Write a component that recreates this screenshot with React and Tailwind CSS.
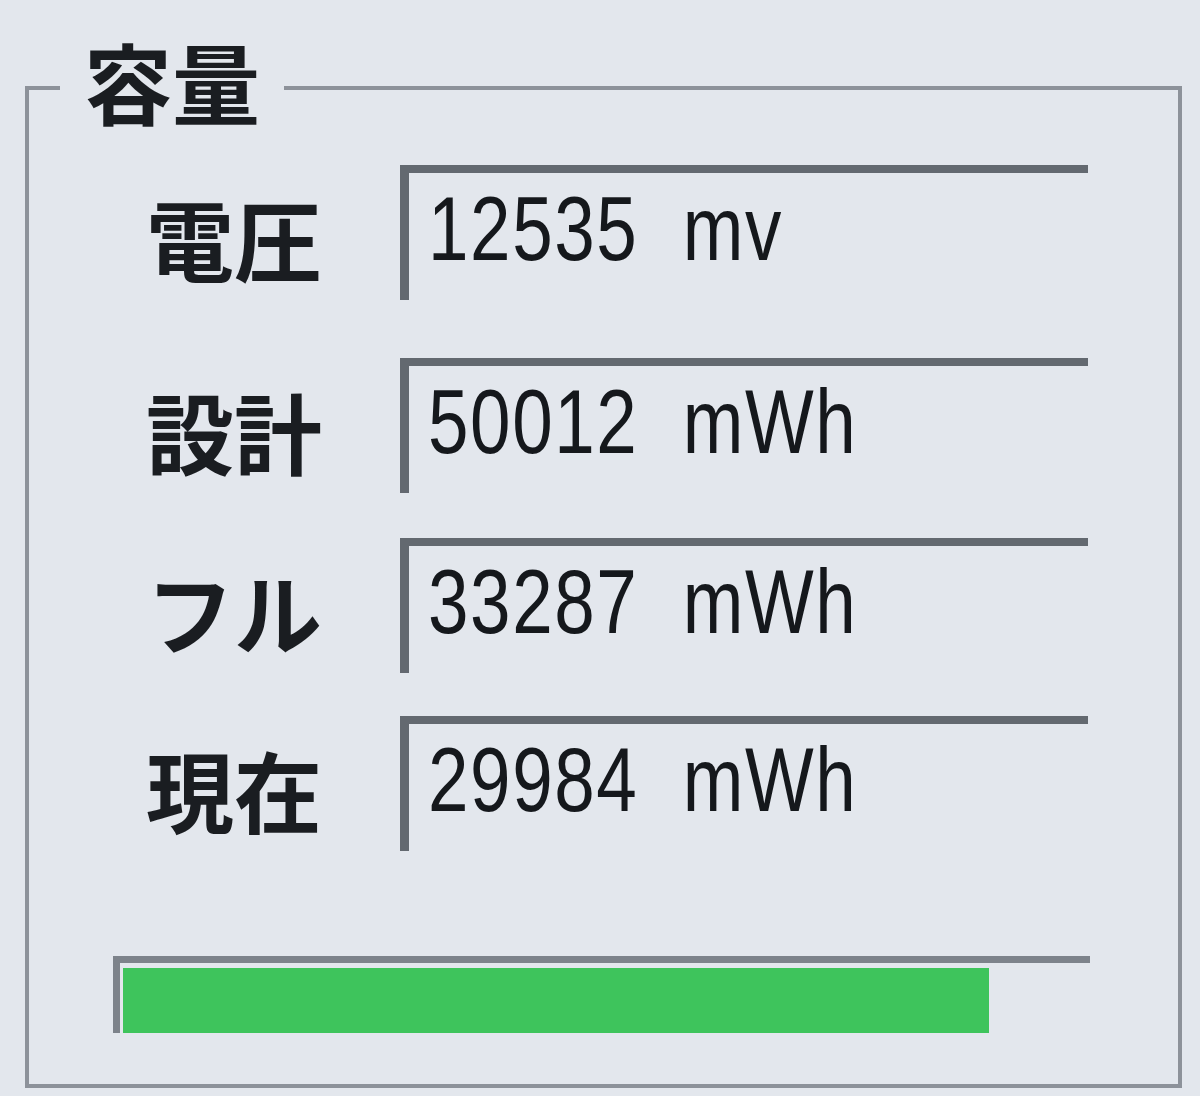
import React from 'react';

const cjk = { fontFamily: '"Noto Sans CJK JP", "Noto Sans", sans-serif' };
const latin = { fontFamily: '"Liberation Sans", Arial, sans-serif' };

// vertical gaps differ a bit row to row in the reference
const rows = [
  { label: '電圧', value: '12535 mv', gap: 'mt-0' },
  { label: '設計', value: '50012 mWh', gap: 'mt-[58px]' },
  { label: 'フル', value: '33287 mWh', gap: 'mt-[45px]' },
  { label: '現在', value: '29984 mWh', gap: 'mt-[43px]' },
];

function Field({ value }) {
  return (
    <div className="w-[688px] h-[135px] border-t-[8px] border-l-[9px] border-[#636970] pl-[19px] pt-[10px]">
      <span
        className="inline-block origin-left scale-x-[0.8] text-[91px] leading-none tracking-[2px] text-[#15181c] [word-spacing:28px] whitespace-nowrap"
        style={latin}
      >
        {value}
      </span>
    </div>
  );
}

function Row({ label, value, gap }) {
  return (
    <div className={`flex ${gap}`}>
      <div className="w-[254px] pt-[28px] text-[88px] font-bold leading-none text-[#1a1d21]" style={cjk}>
        {label}
      </div>
      <Field value={value} />
    </div>
  );
}

export default function App() {
  const current = 29984;
  const full = 33287;
  const pct = (current / full) * 100;

  return (
    <div className="min-h-screen bg-[#e3e7ed] pt-[86px] pl-[25px] pr-[18px]">
      <div className="relative h-[1002px] border-[4px] border-[#8d929a] pt-[75px] pl-[84px]">
        <span
          className="absolute left-[31px] top-[-54px] bg-[#e3e7ed] px-[24px] text-[88px] font-bold leading-none text-[#1a1d21]"
          style={cjk}
        >
          容量
        </span>

        <div className="pl-[33px]">
          {rows.map((r) => (
            <Row key={r.label} {...r} />
          ))}
        </div>

        <div className="mt-[105px] w-[977px] h-[77px] border-t-[7px] border-l-[7px] border-[#7d838b] pt-[5px] pl-[3px] pr-[6px]">
          <div className="h-[65px] w-full">
            <div className="h-full bg-[#3ec45c]" style={{ width: `${pct}%` }} />
          </div>
        </div>
      </div>
    </div>
  );
}
